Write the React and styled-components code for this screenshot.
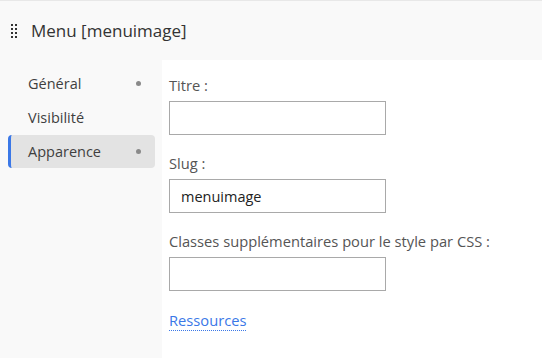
import React from "react";
import styled, { createGlobalStyle } from "styled-components";

const GlobalStyle = createGlobalStyle`
  html, body {
    margin: 0;
    background: #fff;
    font-family: "Open Sans", "Liberation Sans", sans-serif;
  }
`;

const Page = styled.div`
  border-top: 1px solid #e8e8e8;
  min-height: 357px;
  display: flex;
  flex-direction: column;
`;

const Header = styled.div`
  height: 59px;
  background: #f9f9f9;
  display: flex;
  align-items: center;
  padding-left: 10px;
  gap: 13px;
`;

const Title = styled.h1`
  margin: 0;
  font-size: 17px;
  font-weight: 400;
  color: #333;
`;

const Body = styled.div`
  flex: 1;
  display: flex;
`;

const Sidebar = styled.nav`
  width: 162px;
  box-sizing: border-box;
  background: #f9f9f9;
  padding: 7px 7px 0 8px;
  display: flex;
  flex-direction: column;
  gap: 1px;
`;

const NavItem = styled.div`
  height: 33px;
  display: flex;
  align-items: center;
  justify-content: space-between;
  padding: 0 14px 0 17px;
  border-left: 3px solid ${(p) => (p.$active ? "#3b78e7" : "transparent")};
  border-radius: 4px;
  background: ${(p) => (p.$active ? "#e3e3e3" : "transparent")};
  font-size: 14.5px;
  color: #3f3f3f;
`;

const Dot = styled.span`
  width: 5px;
  height: 5px;
  border-radius: 50%;
  background: #8a8a8a;
`;

const Main = styled.div`
  flex: 1;
  background: #fff;
  padding: 15px 0 0 7px;
`;

const Field = styled.div`
  margin-bottom: 18px;
`;

const Label = styled.label`
  display: block;
  font-size: 14.7px;
  line-height: 20px;
  color: #555;
  margin-bottom: 6px;
`;

const Input = styled.input`
  display: block;
  box-sizing: border-box;
  width: 217px;
  height: 34px;
  border: 1px solid #a9a9a9;
  padding: 0 11px;
  font-family: inherit;
  font-size: 14.5px;
  color: #222;
  outline: none;
`;

const Link = styled.a`
  font-size: 14.7px;
  line-height: 20px;
  color: #3b78e7;
  text-decoration: none;
  border-bottom: 1px dotted #3b78e7;
`;

const Grip = () => (
  <svg width="8" height="16" viewBox="0 0 8 16">
    {[0, 1, 2, 3].map((r) =>
      [0, 1].map((c) => (
        <rect key={`${r}-${c}`} x={c * 4 + 1} y={r * 4 + 1} width="2" height="2" fill="#333" />
      ))
    )}
  </svg>
);

const fields = [
  { label: "Titre :", value: "" },
  { label: "Slug :", value: "menuimage" },
  { label: "Classes supplémentaires pour le style par CSS :", value: "" },
];

const App = () => {
  return (
    <>
      <GlobalStyle />
      <Page>
        <Header>
          <Grip />
          <Title>Menu [menuimage]</Title>
        </Header>
        <Body>
          <Sidebar>
            <NavItem>
              Général <Dot />
            </NavItem>
            <NavItem>Visibilité</NavItem>
            <NavItem $active>
              Apparence <Dot />
            </NavItem>
          </Sidebar>
          <Main>
            {fields.map((f) => (
              <Field key={f.label}>
                <Label>{f.label}</Label>
                <Input defaultValue={f.value} />
              </Field>
            ))}
            <Link href="#">Ressources</Link>
          </Main>
        </Body>
      </Page>
    </>
  );
};

export default App;
